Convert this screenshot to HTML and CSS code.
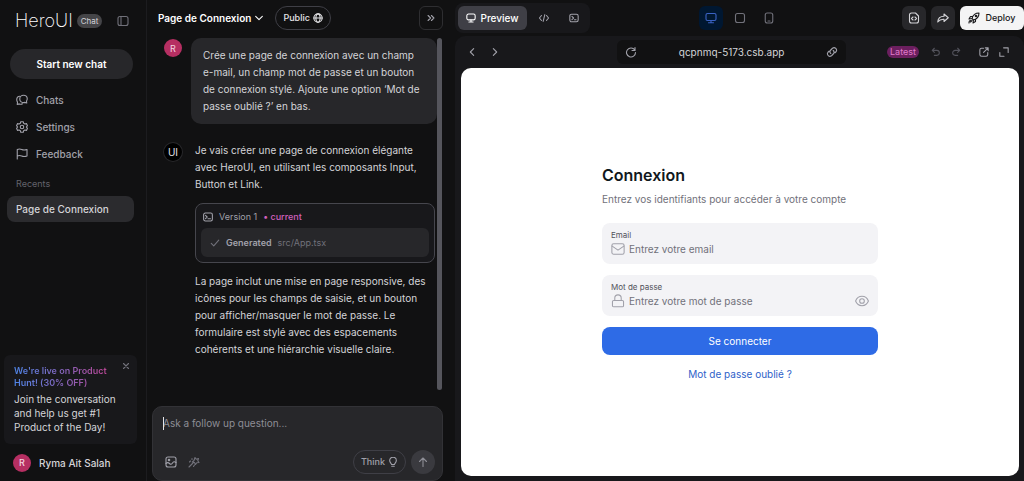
FILE: index.html
```html
<!DOCTYPE html>
<html lang="fr">
<head>
    <meta charset="UTF-8">
    <meta name="viewport" content="width=device-width, initial-scale=1.0">
    <title>HeroUI Chat - Page de Connexion</title>
    <link rel="stylesheet" href="styles.css">
</head>
<body>
    <aside class="sidebar">
        <div class="brand">
            <span class="logo">HeroUI</span>
            <span class="logo-tag">Chat</span>
            <button class="icon-button brand-toggle" aria-label="Toggle sidebar">
                <svg class="icon" viewBox="0 0 24 24"><rect x="2" y="3" width="20" height="18" rx="4"/><path d="M8 3v18"/></svg>
            </button>
        </div>

        <button class="new-chat">Start new chat</button>

        <nav class="menu">
            <a href="#" class="menu-link">
                <svg class="icon icon-md" viewBox="0 0 24 24"><path d="M15 2.500c4.500 0 7.500 3 7.500 7 0 2-.8 3.600-1.500 4.600l.5 3.900-4-1.200c-6 1.500-10-2-10-6.800C7.500 5.500 10.600 2.500 15 2.500z"/><path d="M8 4.500C4 4.500 1.500 7.500 1.500 11.500c0 2 .5 3.200 1.500 4.500L2.500 21l4-1.200c2 1 4.500 1 6.500-.3"/></svg>
                Chats
            </a>
            <a href="#" class="menu-link">
                <svg class="icon icon-md" viewBox="0 0 24 24"><path d="M9.500 1.500h5l.8 3.200 2.400 1.400 3.200-.9 2 4.100-2.100 2.700 2.100 2.700-2 4.100-3.200-.9-2.400 1.400-.8 3.200h-5l-.8-3.200-2.400-1.400-3.200.9-2-4.100L3.200 12 1.100 9.300l2-4.100 3.200.9 2.400-1.400z"/><circle cx="12" cy="12" r="3.500"/></svg>
                Settings
            </a>
            <a href="#" class="menu-link">
                <svg class="icon icon-md" viewBox="0 0 24 24"><path d="M2.500 22V3c3-1.500 6-1.500 9 0s6 1.500 10.500 0v13c-4.500 1.500-7.500 1.500-10.500 0s-6-1.500-9 0"/></svg>
                Feedback
            </a>
        </nav>

        <h2 class="recents-title">Recents</h2>
        <a href="#" class="recent-item">Page de Connexion</a>

        <section class="promo">
            <button class="icon-button promo-close" aria-label="Close">
                <svg class="icon icon-sm" viewBox="0 0 24 24"><path d="M6 6l12 12M18 6L6 18"/></svg>
            </button>
            <h3 class="promo-title">We're live on Product Hunt! (30% OFF)</h3>
            <p class="promo-text">Join the conversation and help us get #1 Product of the Day!</p>
        </section>

        <div class="user">
            <span class="avatar">R</span>
            <span>Ryma Ait Salah</span>
        </div>
    </aside>

    <section class="chat">
        <header class="chat-header">
            <button class="chat-title">
                Page de Connexion
                <svg class="icon icon-sm" viewBox="0 0 24 24"><path d="M4 8l8 8 8-8"/></svg>
            </button>
            <button class="pill">
                Public
                <svg class="icon icon-sm" viewBox="0 0 24 24"><circle cx="12" cy="12" r="10"/><ellipse cx="12" cy="12" rx="5" ry="10"/><path d="M2 12h20"/></svg>
            </button>
            <button class="collapse" aria-label="Collapse chat">
                <svg class="icon icon-sm" viewBox="0 0 24 24"><path d="M5 6l6 6-6 6M13 6l6 6-6 6"/></svg>
            </button>
        </header>

        <div class="chat-body">
            <div class="messages">
                <div class="message">
                    <span class="avatar">R</span>
                    <p class="bubble">Crée une page de connexion avec un champ e-mail, un champ mot de passe et un bouton de connexion stylé. Ajoute une option ‘Mot de passe oublié ?’ en bas.</p>
                </div>
                <div class="message">
                    <span class="avatar avatar-ui">UI</span>
                    <div class="answer">
                        <p>Je vais créer une page de connexion élégante avec HeroUI, en utilisant les composants Input, Button et Link.</p>
                        <div class="version">
                            <div class="version-head">
                                <svg class="icon icon-sm" viewBox="0 0 24 24"><rect x="1.500" y="2.500" width="21" height="19" rx="4"/><path d="M6 8l4 4-4 4M12 16h6"/></svg>
                                Version 1
                                <span class="current">• current</span>
                            </div>
                            <div class="version-file">
                                <svg class="icon icon-sm" viewBox="0 0 24 24"><path d="M3 13l6 6L21 5"/></svg>
                                <strong>Generated</strong>
                                <span class="file-name">src/App.tsx</span>
                            </div>
                        </div>
                        <p>La page inclut une mise en page responsive, des icônes pour les champs de saisie, et un bouton pour afficher/masquer le mot de passe. Le formulaire est stylé avec des espacements cohérents et une hiérarchie visuelle claire.</p>
                    </div>
                </div>
            </div>
            <div class="scrollbar"></div>
        </div>

        <form class="composer">
            <textarea class="composer-input" rows="2" aria-label="Message" placeholder="Ask a follow up question..."></textarea>
            <div class="composer-tools">
                <button type="button" class="icon-button" aria-label="Add image">
                    <svg class="icon icon-md light" viewBox="0 0 24 24"><rect x="2" y="2" width="20" height="20" rx="4"/><circle cx="8" cy="8" r="1.500"/><path d="M2 15c3-3 5-2 7 0s4 2 6-1 4-3 7-1"/></svg>
                </button>
                <button type="button" class="icon-button" aria-label="Improve prompt">
                    <svg class="icon icon-md" viewBox="0 0 24 24"><path d="M14 3l2.500 3.500L21 5l-1.500 4.500L22 13l-4.500.5L15 17l-2-4-4.500-1L12 9zM10 14l-8 8M5 10l-2 2M13 18l-2 3M8 5v2"/></svg>
                </button>
                <button type="button" class="pill think">
                    Think
                    <svg class="icon icon-sm" viewBox="0 0 24 24"><path d="M8.500 18c0-3-4.500-4.500-4.500-9.500a8 8 0 0 1 16 0c0 5-4.500 6.500-4.500 9.500zM9 22h6"/></svg>
                </button>
                <button class="send" aria-label="Send">
                    <svg class="icon icon-md" viewBox="0 0 24 24"><path d="M12 21V4M5 11l7-7 7 7"/></svg>
                </button>
            </div>
        </form>
    </section>

    <main class="workspace">
        <header class="toolbar">
            <div class="tabs">
                <button class="tab active">
                    <svg class="icon icon-sm" viewBox="0 0 24 24"><rect x="2" y="2.500" width="20" height="14" rx="4"/><path d="M12 17v4M7 21.500h10"/></svg>
                    Preview
                </button>
                <button class="tab" aria-label="Code">
                    <svg class="icon icon-sm" viewBox="0 0 24 24"><path d="M6 6l-5 6 5 6M18 6l5 6-5 6M14 4l-4 16"/></svg>
                </button>
                <button class="tab" aria-label="Console">
                    <svg class="icon icon-sm" viewBox="0 0 24 24"><rect x="2" y="3" width="20" height="18" rx="4"/><path d="M7 8l4 4-4 4M13 16h4"/></svg>
                </button>
            </div>
            <div class="devices">
                <button class="device active" aria-label="Desktop">
                    <svg class="icon icon-md" viewBox="0 0 24 24"><rect x="2" y="3" width="20" height="14" rx="3"/><path d="M12 17v4M7 21.500h10"/></svg>
                </button>
                <button class="device" aria-label="Tablet">
                    <svg class="icon icon-md" viewBox="0 0 24 24"><rect x="3" y="3" width="18" height="18" rx="4"/></svg>
                </button>
                <button class="device" aria-label="Mobile">
                    <svg class="icon icon-md" viewBox="0 0 24 24"><rect x="4.500" y="2" width="15" height="20" rx="4"/><path d="M10 18h4"/></svg>
                </button>
            </div>
            <div class="actions">
                <button class="action" aria-label="View code file">
                    <svg class="icon icon-md" viewBox="0 0 24 24"><path d="M7 2h8l6 6v10a4 4 0 0 1-4 4H7a4 4 0 0 1-4-4V6a4 4 0 0 1 4-4z"/><path d="M10 10l-3 3 3 3M14 10l3 3-3 3"/></svg>
                </button>
                <button class="action" aria-label="Share">
                    <svg class="icon icon-md" viewBox="0 0 24 24"><path d="M14 4l8.500 7.500L14 19v-4.500C8 14 4.500 16 1.500 20 2 13 6.500 8.500 14 8.500z"/></svg>
                </button>
                <button class="deploy">
                    <svg class="icon icon-md" viewBox="0 0 24 24"><path d="M8 13C10 6 15 2 22 2c0 7-4 12-11 14zM9 9H5l-3 5 6-1M15 15v4l-5 3 1-6M2 22c0-3 1-5 3-5M5 20l3-3"/><circle cx="16" cy="8" r="1.500"/></svg>
                    Deploy
                </button>
            </div>
        </header>

        <div class="browser">
            <div class="browser-bar">
                <div class="browser-nav">
                    <button class="icon-button" aria-label="Back"><svg class="icon icon-sm light" viewBox="0 0 24 24"><path d="M16 4l-8 8 8 8"/></svg></button>
                    <button class="icon-button" aria-label="Forward"><svg class="icon icon-sm light" viewBox="0 0 24 24"><path d="M8 4l8 8-8 8"/></svg></button>
                </div>
                <div class="address">
                    <button class="icon-button" aria-label="Reload"><svg class="icon light" viewBox="0 0 24 24"><path d="M20 3v6h-6M19.500 8A9 9 0 1 0 21 13"/></svg></button>
                    <span class="url">qcpnmq-5173.csb.app</span>
                    <button class="icon-button" aria-label="Copy link"><svg class="icon light" viewBox="0 0 24 24"><path d="M9.500 15a5 5 0 0 1 0-7l3.500-3.500a5 5 0 0 1 7 7L18 13.500M14.500 9a5 5 0 0 1 0 7L11 19.500a5 5 0 0 1-7-7L6 10.500"/></svg></button>
                </div>
                <div class="browser-tools">
                    <span class="latest">Latest</span>
                    <div class="tool-group dim">
                        <button aria-label="Undo"><svg class="icon icon-sm" viewBox="0 0 24 24"><path d="M8 3L3 8l5 5M3 8h11a6 6 0 0 1 0 12H8"/></svg></button>
                        <button aria-label="Redo"><svg class="icon icon-sm" viewBox="0 0 24 24"><path d="M16 3l5 5-5 5M21 8H10a6 6 0 0 0 0 12h6"/></svg></button>
                    </div>
                    <div class="tool-group light">
                        <button aria-label="Open in new tab"><svg class="icon icon-sm" viewBox="0 0 24 24"><path d="M11 3H6a4 4 0 0 0-4 4v11a4 4 0 0 0 4 4h11a4 4 0 0 0 4-4v-5M15 2h7v7M22 2L11 13"/></svg></button>
                        <button aria-label="Full screen"><svg class="icon icon-sm" viewBox="0 0 24 24"><path d="M11 2h11v11M2 13v9h10"/></svg></button>
                    </div>
                </div>
            </div>

            <div class="page">
                <form class="login">
                    <h1 class="login-title">Connexion</h1>
                    <p class="login-text">Entrez vos identifiants pour accéder à votre compte</p>
                    <div class="field">
                        <label for="email">Email</label>
                        <div class="field-row">
                            <svg class="icon icon-lg" viewBox="0 0 24 24"><rect x="1.500" y="3" width="21" height="18" rx="3"/><path d="M2 7l10 7 10-7"/></svg>
                            <input type="email" id="email" placeholder="Entrez votre email">
                        </div>
                    </div>
                    <div class="field">
                        <label for="password">Mot de passe</label>
                        <div class="field-row">
                            <svg class="icon icon-lg" viewBox="0 0 24 24"><rect x="2.500" y="11" width="19" height="11" rx="2"/><path d="M6.500 11V7a5.500 5.500 0 0 1 11 0v4"/></svg>
                            <input type="password" id="password" placeholder="Entrez votre mot de passe">
                            <button type="button" class="icon-button" aria-label="Afficher le mot de passe">
                                <svg class="icon icon-lg" viewBox="0 0 24 24"><path d="M1 12c2-5 6-8 11-8s9 3 11 8c-2 5-6 8-11 8s-9-3-11-8z"/><circle cx="12" cy="12" r="4"/></svg>
                            </button>
                        </div>
                    </div>
                    <button class="submit">Se connecter</button>
                    <a href="#" class="forgot">Mot de passe oublié ?</a>
                </form>
            </div>
        </div>
    </main>
</body>
</html>
```
FILE: styles.css
```css
* {
    box-sizing: border-box;
}

body {
    margin: 0;
    height: 100vh;
    display: flex;
    overflow: hidden;
    background-color: #111112;
    color: #d4d4d8;
    font-family: Inter, "Liberation Sans", sans-serif;
    font-size: 10px;
    line-height: 14px;
}

h1, h2, h3, p {
    margin: 0;
}

a {
    text-decoration: none;
}

button, input, textarea {
    font: inherit;
    color: inherit;
    border: none;
    background: none;
    padding: 0;
    margin: 0;
}

button {
    display: flex;
    align-items: center;
    justify-content: center;
    cursor: pointer;
}

/* Icons */
.icon {
    width: 12px;
    height: 12px;
    flex-shrink: 0;
    fill: none;
    stroke: currentColor;
    stroke-width: 2.2;
    stroke-linecap: round;
    stroke-linejoin: round;
}

.icon-sm {
    width: 10px;
    height: 10px;
    stroke-width: 2.6;
}

.icon-lg {
    width: 14px;
    height: 14px;
    stroke-width: 1.8;
}

.icon-button {
    color: #71717a;
}

.light {
    color: #a1a1aa;
}

.dim {
    color: #52525b;
}

.avatar {
    width: 18px;
    height: 18px;
    flex-shrink: 0;
    display: flex;
    align-items: center;
    justify-content: center;
    border-radius: 50%;
    background-color: #b62f62;
    color: #f4d5e0;
    font-size: 9px;
}

.avatar-ui {
    background-color: #000;
    color: #e4e4e7;
    box-shadow: 0 0 0 1px #27272a;
    font-size: 10px;
}

/* Sidebar */
.sidebar {
    width: 147px;
    flex-shrink: 0;
    display: flex;
    flex-direction: column;
    border-right: 1px solid #1c1c1f;
    padding: 10px 9px 9px 4px;
}

.brand {
    display: flex;
    align-items: center;
    padding: 0 8px 0 11px;
    height: 22px;
}

.logo {
    font-size: 18px;
    font-weight: 200;
    color: #fff;
}

.logo-tag {
    margin-left: 4px;
    padding: 0 4px;
    border-radius: 8px;
    background-color: #454548;
    font-size: 8px;
    color: #d4d4d8;
}

.brand-toggle {
    margin-left: auto;
}

.new-chat {
    margin: 17px 4px 0 6px;
    height: 30px;
    border-radius: 15px;
    background-color: #27272a;
    color: #fff;
    font-weight: 600;
}

.menu {
    margin-top: 14px;
    padding-left: 12px;
    display: flex;
    flex-direction: column;
    gap: 13px;
}

.menu-link {
    display: flex;
    align-items: center;
    gap: 8px;
    color: #a1a1aa;
    font-weight: 500;
}

.recents-title {
    margin: 16px 0 5px 12px;
    font-size: 9px;
    font-weight: 400;
    color: #63636b;
}

.recent-item {
    margin: 0 3px;
    padding: 6px 9px;
    border-radius: 8px;
    background-color: #2b2b2e;
    color: #d4d4d8;
    font-weight: 500;
}

.promo {
    position: relative;
    margin-top: auto;
    padding: 10px;
    border-radius: 6px;
    background-color: #18181b;
}

.promo-close {
    position: absolute;
    top: 6px;
    right: 6px;
}

.promo-title {
    width: 100px;
    font-size: 9px;
    line-height: 12px;
    font-weight: 600;
    color: transparent;
    background-image: linear-gradient(90deg, #4f86e8, #c0408c);
    background-clip: text;
    -webkit-background-clip: text;
}

.promo-text {
    margin-top: 3px;
}

.user {
    margin-top: 10px;
    padding-left: 9px;
    display: flex;
    align-items: center;
    gap: 8px;
    font-weight: 500;
}

/* Chat */
.chat {
    width: 308px;
    flex-shrink: 0;
    display: flex;
    flex-direction: column;
    padding-right: 12px;
}

.chat-header {
    display: flex;
    align-items: center;
    padding: 6px 0 6px 11px;
}

.chat-title {
    gap: 3px;
    color: #fff;
    font-weight: 600;
}

.pill {
    height: 24px;
    padding: 0 7px;
    gap: 3px;
    border: 1px solid #3f3f46;
    border-radius: 12px;
    color: #e4e4e7;
    font-size: 9px;
    font-weight: 500;
}

.chat-header .pill {
    margin-left: 11px;
}

.collapse {
    margin-left: auto;
    width: 24px;
    height: 24px;
    border: 1px solid #2e2e31;
    border-radius: 6px;
    color: #a1a1aa;
}

.chat-body {
    flex: 1;
    min-height: 0;
    display: flex;
    padding: 2px 1px 0 0;
}

.messages {
    flex: 1;
    overflow: hidden;
    padding-left: 17px;
}

.scrollbar {
    width: 5px;
    border-radius: 3px;
    background-color: #55555c;
}

.message {
    display: flex;
    gap: 9px;
    line-height: 17px;
    margin-bottom: 18px;
}

.message .avatar {
    margin-top: 1px;
}

.bubble {
    flex: 1;
    padding: 9px 12px;
    border-radius: 10px;
    background-color: #27272a;
}

.answer {
    flex: 1;
    padding-left: 4px;
}

.version {
    margin: 10px 2px 10px 0;
    padding: 4px 5px 5px;
    border: 1px solid #46464d;
    border-radius: 8px;
    background-color: #18181b;
    font-size: 9px;
    color: #a1a1aa;
}

.version-head {
    display: flex;
    align-items: center;
    gap: 6px;
    padding: 0 2px 3px;
}

.current {
    color: #d160bd;
    font-weight: 500;
}

.version-file {
    display: flex;
    align-items: center;
    gap: 6px;
    padding: 6px 9px;
    border-radius: 6px;
    background-color: #27272a;
}

.version-file .icon,
.file-name {
    color: #71717a;
}

.version-file strong {
    font-weight: 600;
}

.composer {
    position: relative;
    margin: 16px 0 0 5px;
    padding: 9px 7px 6px 10px;
    border: 1px solid #323236;
    border-radius: 10px;
    background-color: #27272a;
}

/* Text caret */
.composer::before {
    content: "";
    position: absolute;
    top: 10px;
    left: 10px;
    width: 1px;
    height: 13px;
    background-color: #e4e4e7;
}

.composer-input {
    display: block;
    width: 100%;
    height: 34px;
    resize: none;
    outline: none;
}

.composer-input::placeholder {
    color: #8e8e96;
}

.composer-tools {
    display: flex;
    align-items: center;
    gap: 11px;
    padding-left: 2px;
}

.think {
    margin-left: auto;
    color: #a1a1aa;
}

.send {
    width: 24px;
    height: 24px;
    margin-left: -6px;
    border-radius: 50%;
    background-color: #3a3a3f;
    color: #8e8e96;
}

/* Workspace */
.workspace {
    flex: 1;
    min-width: 0;
    display: flex;
    flex-direction: column;
}

.toolbar {
    display: grid;
    grid-template-columns: 1fr auto 1fr;
    align-items: center;
    height: 36px;
}

.tabs {
    justify-self: start;
    display: flex;
    gap: 4px;
    padding: 3px;
    border-radius: 8px;
    background-color: #18181b;
}

.tab {
    width: 26px;
    height: 24px;
    border-radius: 6px;
    color: #a1a1aa;
}

.tab.active {
    width: 69px;
    gap: 4px;
    background-color: #3f3f46;
    color: #fff;
    font-weight: 500;
}

.devices {
    display: flex;
    gap: 5px;
}

.device {
    width: 24px;
    height: 24px;
    border-radius: 6px;
    color: #71717a;
}

.device.active {
    background-color: #001731;
    color: #3b63c4;
}

.actions {
    justify-self: end;
    display: flex;
    gap: 5px;
}

.action {
    width: 24px;
    height: 24px;
    border-radius: 6px;
    background-color: #27272a;
    color: #d4d4d8;
}

.deploy {
    width: 64px;
    height: 24px;
    gap: 5px;
    border-radius: 6px;
    background-color: #f4f4f5;
    color: #18181b;
    font-size: 9px;
    font-weight: 500;
}

.browser {
    flex: 1;
    min-height: 0;
    display: flex;
    flex-direction: column;
    padding: 0 5px 5px 6px;
    border-radius: 10px 10px 0 0;
    background-color: #18181b;
}

.browser-bar {
    display: grid;
    grid-template-columns: 28fr 41fr 31fr;
    align-items: center;
    height: 32px;
}

.browser-nav {
    display: flex;
    gap: 13px;
    padding-left: 6px;
}

.address {
    display: flex;
    align-items: center;
    height: 24px;
    padding: 0 8px;
    border-radius: 6px;
    background-color: #111112;
}

.url {
    flex: 1;
    text-align: center;
}

.browser-tools {
    justify-self: end;
    display: flex;
    align-items: center;
    gap: 18px;
    padding-right: 10px;
}

.tool-group {
    display: flex;
    gap: 10px;
}

.latest {
    margin-right: -6px;
    padding: 0 3px;
    border-radius: 6px;
    background-color: #6b1f5f;
    color: #e07bcc;
    font-size: 9px;
    line-height: 12px;
}

/* Login page shown in the preview */
.page {
    flex: 1;
    display: flex;
    align-items: center;
    justify-content: center;
    border-radius: 10px;
    background-color: #fff;
    color: #71717a;
}

.login {
    width: 276px;
    display: flex;
    flex-direction: column;
}

.login-title {
    font-size: 16px;
    line-height: 24px;
    font-weight: 600;
    color: #11181c;
}

.login-text {
    margin: 5px 0 17px;
}

.field {
    height: 41px;
    margin-bottom: 11px;
    padding: 6px 9px;
    border-radius: 8px;
    background-color: #f3f3f6;
}

.field label {
    display: block;
    font-size: 8px;
    line-height: 12px;
    color: #52525b;
}

.field-row {
    display: flex;
    align-items: center;
    gap: 4px;
    height: 16px;
}

.field-row .icon {
    color: #a1a1aa;
}

.field-row input {
    flex: 1;
    min-width: 0;
    outline: none;
}

.field-row input::placeholder {
    color: #71717a;
}

.submit {
    height: 28px;
    border-radius: 8px;
    background-color: #2e6be6;
    color: #fff;
}

.forgot {
    align-self: center;
    margin-top: 12px;
    color: #2e62c9;
}
```
